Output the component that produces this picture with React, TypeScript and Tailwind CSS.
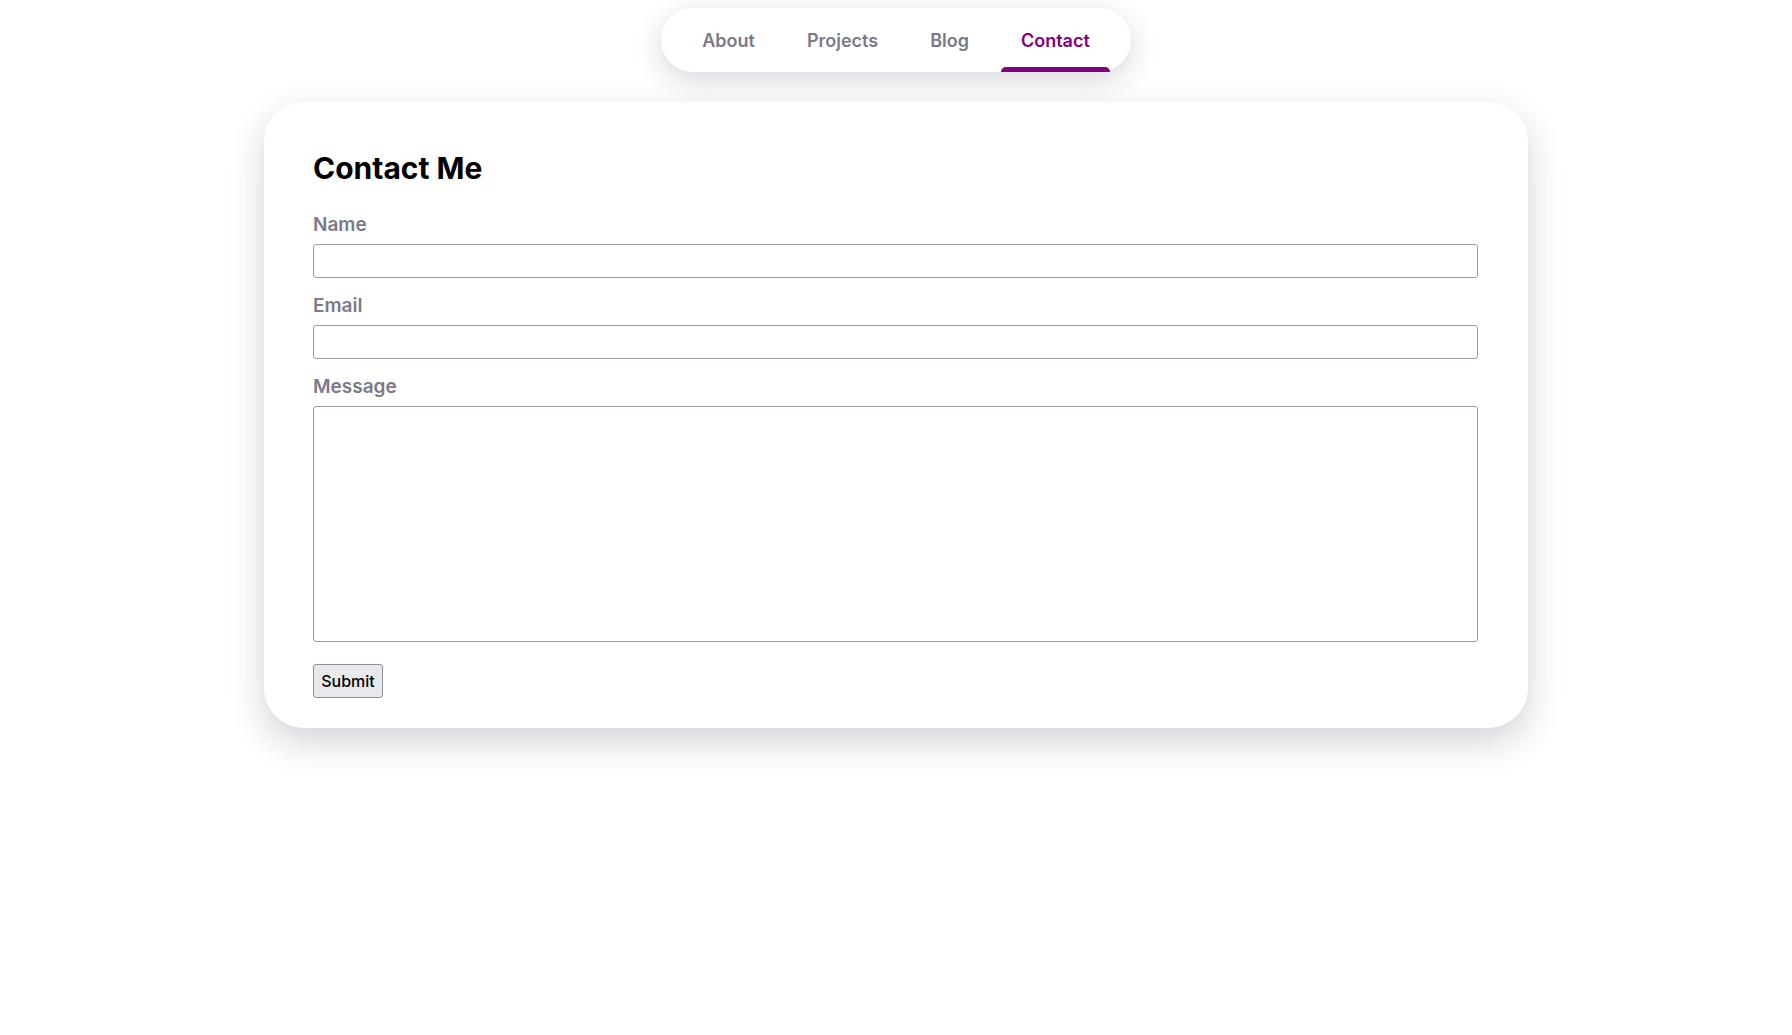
export default function App() {
  const links = ['About', 'Projects', 'Blog', 'Contact'];
  const active = 'Contact';

  return (
    <div className="min-h-screen bg-white pt-2 font-['Inter',sans-serif]">
      {/* Nav */}
      <nav className="mx-auto flex h-16 w-[470px] items-stretch justify-center gap-3 rounded-full bg-white px-6 shadow-[0_8px_28px_rgba(40,40,70,0.18)]">
        {links.map((l) => (
          <a
            key={l}
            href="#"
            className={
              'relative flex items-center px-5 text-[18px] font-semibold ' +
              (l === active ? 'text-[#800080]' : 'text-[#7b7a88]')
            }
          >
            {l}
            {l === active && (
              <span className="absolute bottom-0 left-0 right-0 h-[5px] rounded-t-md bg-[#800080]" />
            )}
          </a>
        ))}
      </nav>

      {/* Card */}
      <div className="mx-auto mt-[30px] w-[1264px] rounded-[40px] bg-white pb-[30px] pl-[49px] pr-[50px] pt-12 shadow-[0_14px_36px_rgba(40,40,70,0.2)]">
        <h1 className="mb-[25px] text-[30px] font-bold leading-9 text-black">Contact Me</h1>
        <form className="flex flex-col" onSubmit={(e) => e.preventDefault()}>
          <label className="text-[19px] font-semibold leading-7 text-[#7b7a88]">Name</label>
          <input className="mt-[5px] h-[34px] rounded-[3px] border-[1.5px] border-[#9b9ba5] px-2" />
          <label className="mt-[14px] text-[19px] font-semibold leading-7 text-[#7b7a88]">Email</label>
          <input className="mt-[5px] h-[34px] rounded-[3px] border-[1.5px] border-[#9b9ba5] px-2" />
          <label className="mt-[14px] text-[19px] font-semibold leading-7 text-[#7b7a88]">Message</label>
          <textarea className="mt-[5px] h-[236px] resize-none rounded-[3px] border-[1.5px] border-[#9b9ba5] px-2" />
          <div className="mt-[22px]">
            <button
              type="submit"
              className="h-[34px] w-[70px] rounded-[3px] border border-[#8f8f9d] bg-[#e9e9ed] text-[16px] font-medium text-black"
            >
              Submit
            </button>
          </div>
        </form>
      </div>
    </div>
  );
}
